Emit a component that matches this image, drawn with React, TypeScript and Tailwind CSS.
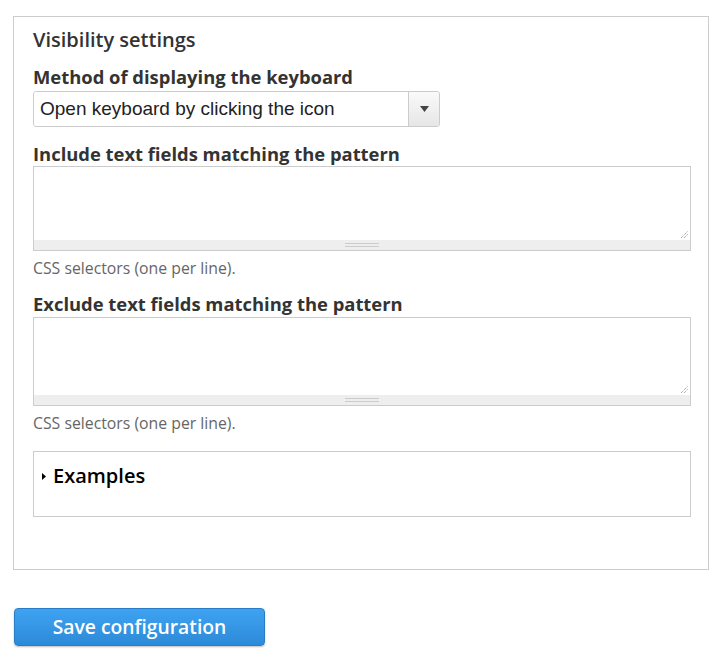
export default function App() {
  return (
    <div className="min-h-[659px] bg-white font-['Open_Sans',sans-serif] text-[#333]">
      <div className="pl-[13px] pr-[14px] pt-[16px]">
        {/* Visibility settings fieldset */}
        <fieldset className="h-[554px] border border-[#ccc] pl-[19px] pr-[17px] pt-[10px]">
          <h2 className="text-[20px] font-semibold leading-[26px] text-[#333]">Visibility settings</h2>

          <label className="mt-[12px] block text-[18.4px] font-bold leading-[24px]">
            Method of displaying the keyboard
          </label>
          <div className="mt-[2px] flex h-[36px] w-[407px] overflow-hidden rounded-[3px] border border-[#ccc]">
            <div className="flex flex-1 items-center bg-white pl-[6px] font-['Liberation_Sans',Arial,sans-serif] text-[19px] text-[#222]">
              Open keyboard by clicking the icon
            </div>
            <div className="flex w-[31px] items-center justify-center border-l border-[#ccc] bg-gradient-to-b from-[#fafafa] to-[#e6e6e6]">
              <svg width="9" height="6" viewBox="0 0 9 6">
                <path d="M0 0h9L4.5 6z" fill="#444" />
              </svg>
            </div>
          </div>

          <label className="mt-[15px] block text-[18.4px] font-bold leading-[24px]">
            Include text fields matching the pattern
          </label>
          <TextArea height="h-[73px]" />
          <p className="mt-[7px] text-[15.8px] leading-[20px] text-[#666]">CSS selectors (one per line).</p>

          <label className="mt-[14px] block text-[18.4px] font-bold leading-[24px]">
            Exclude text fields matching the pattern
          </label>
          <div className="mt-px">
            <TextArea height="h-[77px]" />
          </div>
          <p className="mt-[7px] text-[15.8px] leading-[20px] text-[#666]">CSS selectors (one per line).</p>

          <details className="mt-[18px] h-[66px] border border-[#ccc] px-[8px] pt-[12px]">
            <summary className="flex items-center text-[20px] font-semibold leading-[24px] text-black">
              <svg width="4" height="7" viewBox="0 0 4 7" className="mr-[7px]">
                <path d="M0 0l4 3.5L0 7z" fill="#000" />
              </svg>
              Examples
            </summary>
          </details>
        </fieldset>

        <button className="ml-px mt-[38px] h-[38px] w-[251px] rounded-[4px] border border-[#2a7cc7] bg-gradient-to-b from-[#3ea3f2] to-[#2d8ad8] text-[19.3px] font-semibold text-white shadow-[0_1px_2px_rgba(0,0,0,0.25)]">
          Save configuration
        </button>
      </div>
    </div>
  );
}

function TextArea({ height }: { height: string }) {
  return (
    <div className="border border-[#ccc]">
      <div className={`relative ${height} bg-white`}>
        <svg width="8" height="8" viewBox="0 0 8 8" className="absolute right-[2px] bottom-[2px]">
          <path d="M1 8L8 1M4 8L8 4" stroke="#666" strokeWidth="0.8" strokeDasharray="1 1" />
        </svg>
      </div>
      <div className="flex h-[10px] items-center justify-center bg-[#eee]">
        <div className="flex w-[34px] flex-col gap-[2px]">
          <div className="h-px bg-[#ccc]" />
          <div className="h-px bg-[#ccc]" />
        </div>
      </div>
    </div>
  );
}
